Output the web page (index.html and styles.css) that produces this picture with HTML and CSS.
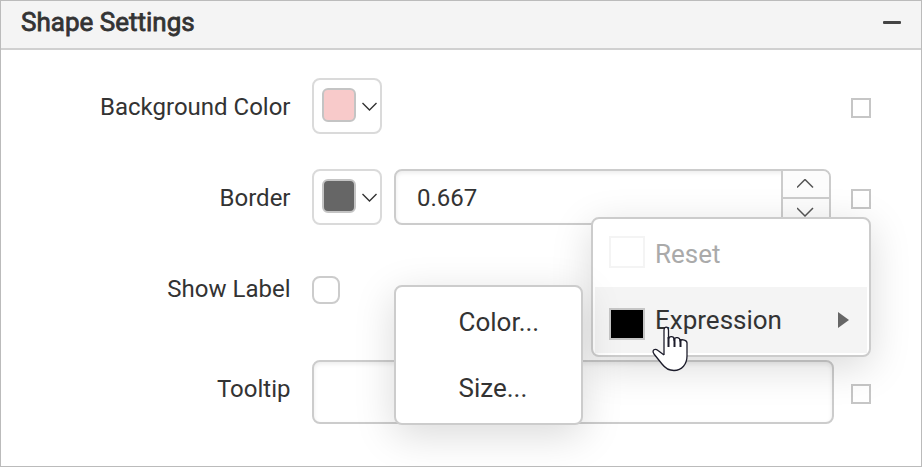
FILE: index.html
```html
<!DOCTYPE html>
<html lang="en">
<head>
<meta charset="utf-8">
<title>Shape Settings</title>
<link rel="stylesheet" href="styles.css">
</head>
<body>
<main class="panel">
  <header class="panel-header">
    <h1 class="title">Shape Settings</h1>
    <span class="collapse"></span>
  </header>
  <div class="form">
    <div class="row row-background">
      <span class="label">Background Color</span>
      <div class="control">
        <div class="color-button">
          <span class="swatch swatch-pink"></span>
          <svg class="chevron" viewBox="0 0 16 10"><path d="M.5 1l7 7 7-7"/></svg>
        </div>
      </div>
      <span class="marker"></span>
    </div>
    <div class="row row-border">
      <span class="label">Border</span>
      <div class="control">
        <div class="color-button">
          <span class="swatch swatch-gray"></span>
          <svg class="chevron" viewBox="0 0 16 10"><path d="M.5 1l7 7 7-7"/></svg>
        </div>
        <div class="number">
          <span class="number-value">0.667</span>
          <div class="spinner">
            <span class="spin"><svg class="spin-icon" viewBox="0 0 18 10"><path d="M0 8.500l8-8 8 8"/></svg></span>
            <span class="spin"><svg class="spin-icon" viewBox="0 0 18 10"><path d="M0 1l8 8 8-8"/></svg></span>
          </div>
        </div>
      </div>
      <span class="marker"></span>
    </div>
    <div class="row row-label">
      <span class="label">Show Label</span>
      <div class="control"><span class="checkbox"></span></div>
    </div>
    <div class="row row-tooltip">
      <span class="label">Tooltip</span>
      <div class="control"><div class="text-input"></div></div>
      <span class="marker"></span>
    </div>
  </div>
  <div class="menu context-menu">
    <div class="item disabled"><span class="item-icon"></span><span class="item-text">Reset</span></div>
    <div class="item active"><span class="item-icon icon-black"></span><span class="item-text">Expression</span><span class="arrow"></span></div>
  </div>
  <div class="menu submenu">
    <div class="item">Color...</div>
    <div class="item">Size...</div>
  </div>
  <svg class="cursor" viewBox="0 0 36 48"><path d="M12 30V5.500C12 1 16.500 1 16.500 5.500V14C17 10.500 22 11 22 14C23.500 11.500 28 12.500 28 15.500C30 14 35 15 35 18V31C35 39 30 45.500 22 45.500C16 45.500 13 43 10 39L2 29C-.5 25 3 23 6 25.500L12 30"/><path class="fingers" d="M16.500 12v10M22.500 13v9M28.500 14v8"/></svg>
</main>
</body>
</html>
```
FILE: styles.css
```css
* { box-sizing: border-box; }
body { margin: 0; font-family: Roboto, sans-serif; font-size: 24px; color: #333; }
.panel { position: relative; width: 922px; height: 467px; border: 1px solid #bbb; background: #fff; overflow: hidden; }
.panel-header { display: flex; align-items: center; justify-content: space-between; height: 49px; padding: 0 20px 5px; background: #f4f4f4; border-bottom: 2px solid #d0d0d0; }
.title { margin: 0; font-size: 26px; line-height: 30px; font-weight: 400; -webkit-text-stroke: 0.8px #333; }
.collapse { width: 18px; height: 3px; border-radius: 1px; background: #444; }
.form { padding: 11px 50px 0 0; }
.row { display: grid; grid-template-columns: 289.5px 21.5px 522px 17px 20px; align-items: center; }
.row-background { height: 90px; }
.row-border { height: 92px; }
.row-label { height: 94px; }
.row-tooltip { height: 110px; }
.label { padding-top: 2px; text-align: right; line-height: 30px; white-space: nowrap; }
.row-tooltip .label { padding: 0 0 7px; }
.row-label .label { padding: 0 0 2px; }
.control { grid-column: 3; display: flex; gap: 12px; }
.marker { grid-column: 5; width: 20px; height: 20px; margin-top: 4px; border: 2px solid #c6c6c6; }
.color-button { display: flex; align-items: flex-start; gap: 6px; width: 70px; height: 56px; padding: 8px 0 0 8px; border: 2px solid #dadada; border-radius: 8px; }
.swatch { width: 34px; height: 34px; border: 2px solid #c4c4c4; border-radius: 6px; }
.swatch-pink { background: #f8caca; }
.swatch-gray { background: #666; }
.chevron { width: 16px; height: 10px; margin-top: 14px; fill: none; stroke: #333; stroke-width: 1.4; }
.number { display: flex; width: 437px; height: 56px; border: 2px solid #ccc; border-radius: 8px; box-shadow: inset 0 2px 4px rgba(0,0,0,.08); }
.number-value { flex: 1; padding: 1px 0 0 21px; line-height: 52px; }
.spinner { width: 48px; border-left: 2px solid #ccc; border-radius: 0 6px 6px 0; background: #fcfcfc; }
.spin { display: flex; justify-content: center; height: 28px; padding-top: 8px; border-bottom: 2px solid #ccc; }
.spin:last-child { border: 0; height: 24px; }
.spin-icon { width: 18px; height: 10px; fill: none; stroke: #555; stroke-width: 1.5; }
.checkbox { width: 28px; height: 28px; border: 2px solid #ccc; border-radius: 8px; }
.text-input { width: 522px; height: 64px; border: 2px solid #ccc; border-radius: 8px; box-shadow: inset 0 2px 4px rgba(0,0,0,.08); }
.menu { position: absolute; height: 140px; padding: 2px; border: 2px solid #ccc; border-radius: 8px; background: #fff; box-shadow: 0 10px 40px rgba(0,0,0,.15); font-size: 26px; line-height: 66px; }
.context-menu { left: 590px; top: 216px; width: 280px; }
.submenu { left: 393px; top: 284px; width: 189px; }
.item { display: flex; align-items: center; height: 66px; }
.context-menu .item { padding: 0 18px 0 14px; }
.submenu .item { padding-left: 60.5px; }
.disabled { color: #aaa; }
.active { background: #f4f4f4; }
.item-icon { width: 36px; height: 32px; margin: -4px 10px 0 0; border: 2px solid #f4f4f4; }
.icon-black { margin-top: 8px; border-color: #c6c6c6; background: #000; }
.arrow { margin-left: auto; border-left: 11px solid #666; border-top: 8px solid transparent; border-bottom: 8px solid transparent; }
.cursor { position: absolute; left: 651px; top: 324px; width: 36px; height: 48px; fill: #fff; stroke: #1c1c2b; stroke-width: 1.3; }
.cursor .fingers { fill: none; stroke-width: 2; }
```
